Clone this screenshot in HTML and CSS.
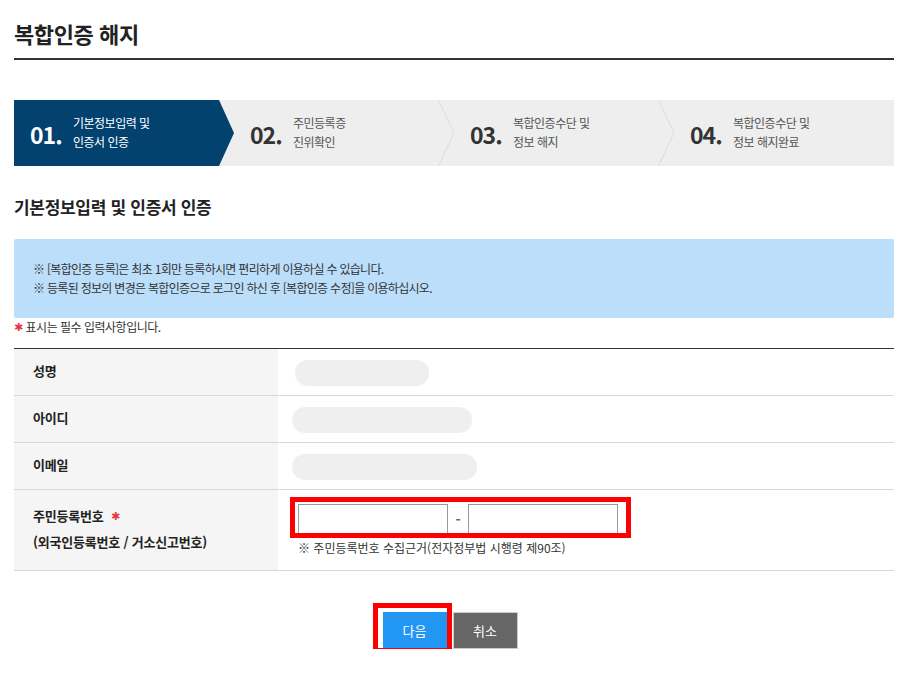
FILE: index.html
```html
<!DOCTYPE html>
<html lang="ko">
  <head>
    <meta charset="UTF-8" />
    <meta name="viewport" content="width=device-width, initial-scale=1.0" />
    <title>복합인증 해지</title>
    <link rel="stylesheet" href="styles.css">
  </head>
  <body>
    <div class="wrap">
      <h1 class="page-title">복합인증 해지</h1>

      <ol class="steps">
        <li class="step step-active">
          <span class="step-num">01.</span>
          <span class="step-txt">기본정보입력 및<br>인증서 인증</span>
        </li>
        <li class="step">
          <span class="step-num">02.</span>
          <span class="step-txt">주민등록증<br>진위확인</span>
          <svg class="step-div" width="17" height="66" viewBox="0 0 17 66"><polyline points="0.5,0 16,33 0.5,66" fill="none" stroke="#dcdcdc" stroke-width="1" /></svg>
        </li>
        <li class="step">
          <span class="step-num">03.</span>
          <span class="step-txt">복합인증수단 및<br>정보 해지</span>
          <svg class="step-div" width="17" height="66" viewBox="0 0 17 66"><polyline points="0.5,0 16,33 0.5,66" fill="none" stroke="#dcdcdc" stroke-width="1" /></svg>
        </li>
        <li class="step">
          <span class="step-num">04.</span>
          <span class="step-txt">복합인증수단 및<br>정보 해지완료</span>
        </li>
      </ol>

      <h2 class="sub-title">기본정보입력 및 인증서 인증</h2>

      <div class="info-box">
        <p>※ [복합인증 등록]은 최초 1회만 등록하시면 편리하게 이용하실 수 있습니다.</p>
        <p>※ 등록된 정보의 변경은 복합인증으로 로그인 하신 후 [복합인증 수정]을 이용하십시오.</p>
      </div>

      <p class="req-note"><span class="req">✱</span> 표시는 필수 입력사항입니다.</p>

      <table class="form-table">
        <tr class="row-short">
          <th>성명</th>
          <td><span class="blank" style="width: 134px; margin-left: 3px;"></span></td>
        </tr>
        <tr class="row-short">
          <th>아이디</th>
          <td><span class="blank" style="width: 180px;"></span></td>
        </tr>
        <tr class="row-short">
          <th>이메일</th>
          <td><span class="blank" style="width: 185px;"></span></td>
        </tr>
        <tr class="row-long">
          <th>주민등록번호 <span class="req">✱</span><br>(외국인등록번호 / 거소신고번호)</th>
          <td>
            <div class="rrn">
              <input class="rrn-input" type="text">
              <span class="dash">-</span>
              <input class="rrn-input" type="password">
              <div class="mark mark-rrn"></div>
            </div>
            <p class="rrn-note">※ 주민등록번호 수집근거(전자정부법 시행령 제90조)</p>
          </td>
        </tr>
      </table>

      <div class="btns">
        <div class="btn-holder">
          <button class="btn btn-next" type="button">다음</button>
          <div class="mark mark-btn"></div>
        </div>
        <button class="btn btn-cancel" type="button">취소</button>
      </div>
    </div>
  </body>
</html>
```

FILE: styles.css
```css
body {
  margin: 0;
  font-family: "Noto Sans CJK KR", "Noto Sans", sans-serif;
  color: #333;
  background: #fff;
}
p {
  margin: 0;
}
.wrap {
  width: 880px;
  margin-left: 14px;
}

.page-title {
  margin: 0;
  padding: 18px 0 10px;
  font-size: 22px;
  line-height: 30px;
  font-weight: 700;
  color: #222;
  letter-spacing: -0.4px;
  border-bottom: 2px solid #333;
}

.steps {
  display: flex;
  list-style: none;
  margin: 40px 0 0;
  padding: 0;
  height: 66px;
  background-color: #eeeeee;
}
.step {
  position: relative;
  width: 220px;
  display: flex;
  align-items: center;
  padding-left: 16px;
  box-sizing: border-box;
}
.step-active {
  background-color: #03416f;
  clip-path: polygon(0 0, 205px 0, 220px 50%, 205px 100%, 0 100%);
}
.step-num {
  width: 43px;
  margin-top: 2px;
  font-size: 23px;
  font-weight: 700;
  letter-spacing: -1px;
  color: #333;
}
.step-txt {
  font-size: 12px;
  line-height: 19px;
  color: #555;
  letter-spacing: -0.5px;
  margin-top: -3px;
}
.step-active .step-num,
.step-active .step-txt {
  color: #fff;
}
.step-div {
  position: absolute;
  right: -1px;
  top: 0;
}

.sub-title {
  margin: 28px 0 0;
  font-size: 17px;
  line-height: 26px;
  font-weight: 700;
  color: #222;
  letter-spacing: -0.3px;
}

.info-box {
  margin-top: 19px;
  padding: 20px 19px 21px;
  background-color: #bbdefa;
  border-radius: 2px;
  font-size: 12px;
  line-height: 19px;
  color: #333;
  letter-spacing: -0.7px;
}

.req-note {
  font-size: 12px;
  line-height: 18px;
  letter-spacing: -0.5px;
  color: #333;
}
.req {
  color: #e8383d;
  font-family: "DejaVu Sans", sans-serif;
  font-size: 11px;
  vertical-align: 1px;
}

.form-table {
  width: 100%;
  margin-top: 11px;
  border-collapse: collapse;
  border-top: 1px solid #333;
  border-bottom: 1px solid #333;
}
.form-table th,
.form-table td {
  border-bottom: 1px solid #d8d8d8;
  padding: 0;
  vertical-align: middle;
}
.form-table th {
  width: 264px;
  padding: 0 0 3px 19px;
  box-sizing: border-box;
  background-color: #f5f5f5;
  text-align: left;
  font-size: 13px;
  line-height: 25px;
  font-weight: 700;
  color: #222;
  letter-spacing: -0.2px;
}
.form-table td {
  padding-left: 14px;
}
.row-short {
  height: 47px;
}
.row-long {
  height: 81px;
}
.row-long th .req {
  margin-left: 4px;
  font-size: 11px;
}
.blank {
  display: block;
  height: 26px;
  margin-top: 1px;
  border-radius: 13px;
  background-color: #efefef;
}

.rrn {
  position: relative;
  display: flex;
  align-items: center;
  padding-left: 6px;
  margin-top: 1px;
}
.rrn-input {
  width: 150px;
  height: 30px;
  box-sizing: border-box;
  margin: 0;
  border: 1px solid #999;
  border-radius: 0;
  padding: 0 6px;
  background: #fff;
}
.dash {
  width: 20px;
  text-align: center;
  font-size: 14px;
  font-weight: 700;
  color: #666;
}
.rrn-note {
  margin-top: 5px;
  padding-left: 6px;
  font-size: 12px;
  line-height: 18px;
  color: #333;
  letter-spacing: 0;
}

.mark {
  position: absolute;
  border: 5px solid #ff0000;
  pointer-events: none;
}
.mark-rrn {
  left: -2px;
  top: -7px;
  width: 331px;
  height: 31px;
}
.mark-btn {
  left: -10px;
  top: -9px;
  width: 69px;
  height: 40px;
}

.btns {
  display: flex;
  justify-content: center;
  gap: 6px;
  margin-top: 41px;
  padding-right: 8px;
}
.btn-holder {
  position: relative;
  display: flex;
}
.btn {
  height: 36px;
  padding: 0;
  border: 0;
  font-family: "Noto Sans CJK KR", "Noto Sans", sans-serif;
  font-size: 13px;
  color: #fff;
  cursor: pointer;
}
.btn-next {
  width: 64px;
  background-color: #2196f3;
}
.btn-cancel {
  width: 65px;
  height: 37px;
  background-color: #666;
  border: 1px solid #ccc;
}
```
